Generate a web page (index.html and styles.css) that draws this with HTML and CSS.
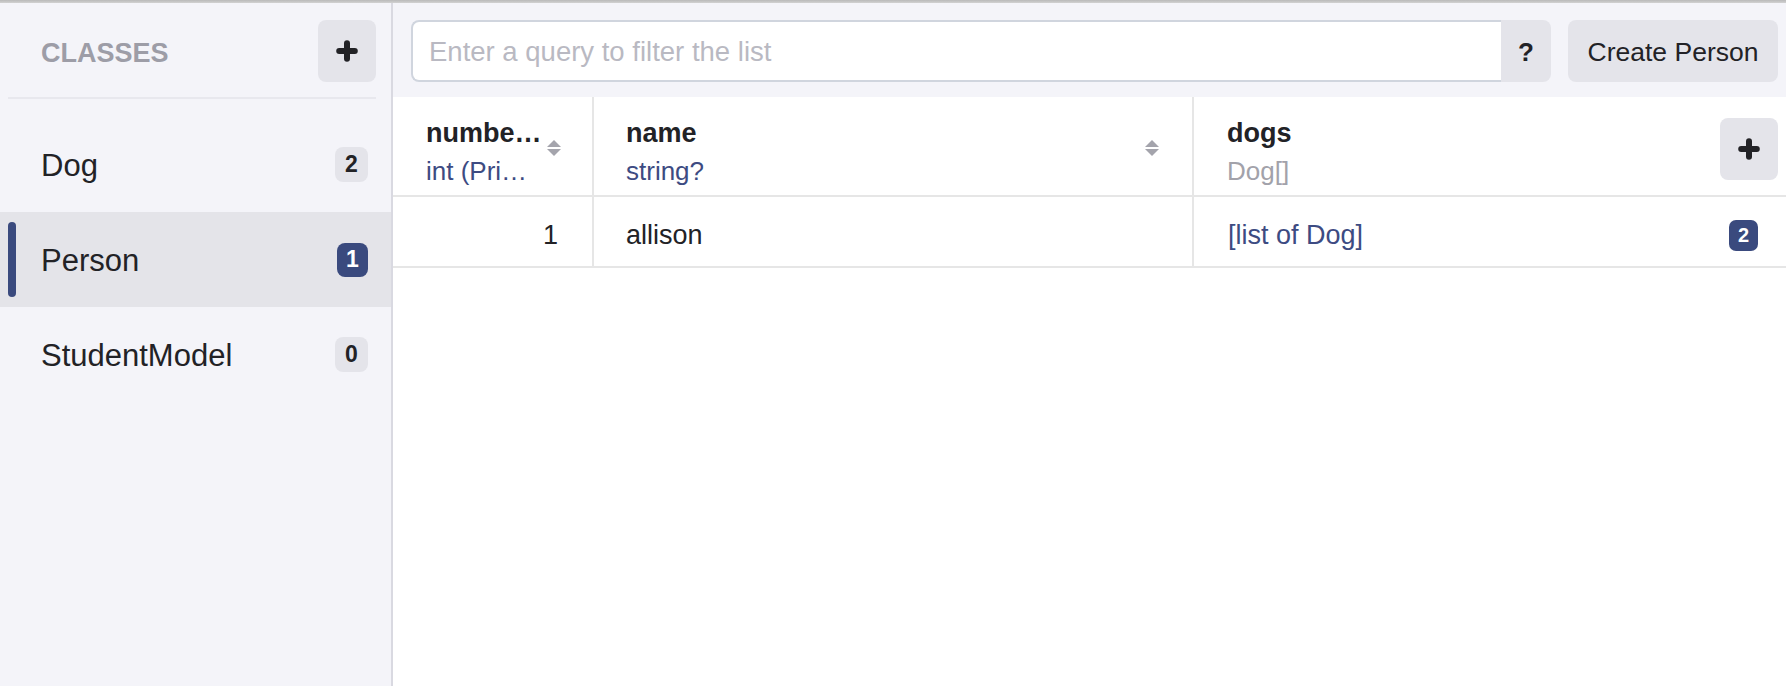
FILE: index.html
```html
<!DOCTYPE html>
<html lang="en">
<head>
<meta charset="utf-8">
<title>Realm Browser</title>
<link rel="stylesheet" href="styles.css">
</head>
<body>
<div class="titlebar"></div>
<div class="app">
  <aside class="sidebar">
    <div class="side-header">
      <span class="side-title">CLASSES</span>
      <button class="icon-btn" aria-label="Add class">
        <svg class="plus" viewBox="0 0 22 22" width="22" height="22"><path d="M11 3.2V18.8M3.2 11H18.8" stroke="#222226" stroke-width="6" stroke-linecap="round" fill="none"/></svg>
      </button>
    </div>
    <ul class="class-list">
      <li class="class-item"><span class="indicator"></span><span class="class-name">Dog</span><span class="badge">2</span></li>
      <li class="class-item selected"><span class="indicator"></span><span class="class-name">Person</span><span class="badge">1</span></li>
      <li class="class-item"><span class="indicator"></span><span class="class-name">StudentModel</span><span class="badge">0</span></li>
    </ul>
  </aside>
  <main class="content">
    <div class="toolbar">
      <div class="query-group">
        <input class="query-input" type="text" placeholder="Enter a query to filter the list">
        <button class="help-btn">?</button>
      </div>
      <button class="create-btn">Create Person</button>
    </div>
    <div class="table">
      <div class="hcell hcell-num">
        <div class="hlabels">
          <div class="hname">numbe…</div>
          <div class="htype">int (Pri…</div>
        </div>
        <svg class="sort" viewBox="0 0 14 16" width="14" height="16"><polygon points="7,0 14,7 0,7" fill="#a4a4ac"/><polygon points="0,9 14,9 7,16" fill="#a4a4ac"/></svg>
      </div>
      <div class="hcell hcell-name">
        <div class="hlabels">
          <div class="hname">name</div>
          <div class="htype">string?</div>
        </div>
        <svg class="sort" viewBox="0 0 14 16" width="14" height="16"><polygon points="7,0 14,7 0,7" fill="#a4a4ac"/><polygon points="0,9 14,9 7,16" fill="#a4a4ac"/></svg>
      </div>
      <div class="hcell hcell-dogs">
        <div class="hlabels">
          <div class="hname">dogs</div>
          <div class="htype htype-muted">Dog[]</div>
        </div>
        <button class="icon-btn icon-btn-col" aria-label="Add property">
          <svg class="plus" viewBox="0 0 22 22" width="22" height="22"><path d="M11 3.2V18.8M3.2 11H18.8" stroke="#222226" stroke-width="6" stroke-linecap="round" fill="none"/></svg>
        </button>
      </div>
      <div class="cell cell-num">1</div>
      <div class="cell cell-name">allison</div>
      <div class="cell cell-dogs"><span class="list-link">[list of Dog]</span><span class="count-badge">2</span></div>
    </div>
  </main>
</div>
</body>
</html>
```
FILE: styles.css
```css
* {
  box-sizing: border-box;
}

html, body {
  margin: 0;
  padding: 0;
  width: 1786px;
  height: 686px;
  overflow: hidden;
  background: #ffffff;
  font-family: "Liberation Sans", Arial, sans-serif;
  color: #222226;
}

.titlebar {
  height: 3px;
  background: linear-gradient(#b9b9b9, #d2d2d2);
}

.app {
  display: flex;
  height: 683px;
}

/* Sidebar */
.sidebar {
  width: 393px;
  flex: none;
  background: #f4f4f9;
  border-right: 2px solid #d9d9e1;
}

.side-header {
  display: flex;
  justify-content: space-between;
  align-items: flex-start;
  height: 96px;
  margin: 0 15px 0 8px;
  padding: 17px 0 0 33px;
  border-bottom: 2px solid #e8e8ee;
}

.side-title {
  font-size: 27px;
  font-weight: bold;
  line-height: 62px;
  padding-top: 2px;
  color: #9d9da7;
}

.icon-btn {
  display: flex;
  align-items: center;
  justify-content: center;
  width: 58px;
  height: 62px;
  padding: 0;
  border: none;
  border-radius: 8px;
  background: #e4e4ea;
}

.plus {
  display: block;
}

.class-list {
  list-style: none;
  margin: 0;
  padding: 18px 0 0;
}

.class-item {
  display: flex;
  align-items: center;
  height: 95px;
  padding: 0 23px 0 8px;
}

.class-item.selected {
  background: #e4e4e9;
}

.indicator {
  width: 8px;
  height: 75px;
  border-radius: 4px;
  margin-right: 25px;
}

.selected .indicator {
  background: #3a4a7e;
}

.class-name {
  flex: 1;
  font-size: 31px;
  padding-top: 3px;
  color: #222226;
}

.badge {
  display: flex;
  align-items: center;
  justify-content: center;
  min-width: 33px;
  height: 35px;
  padding: 0 8px;
  border-radius: 8px;
  background: #e4e4ea;
  color: #222226;
  font-size: 23px;
  font-weight: bold;
}

.selected .badge {
  min-width: 31px;
  height: 34px;
  background: #3a4a7e;
  color: #ffffff;
}

/* Main */
.content {
  flex: 1;
  min-width: 0;
  display: flex;
  flex-direction: column;
  background: #ffffff;
}

.toolbar {
  display: flex;
  align-items: flex-start;
  gap: 17px;
  height: 94px;
  padding: 17px 8px 0 18px;
  background: #f4f4f9;
}

.query-group {
  flex: 1;
  display: flex;
  height: 62px;
}

.query-input {
  flex: 1;
  min-width: 0;
  height: 62px;
  padding: 2px 16px 0;
  border: 2px solid #d0d5de;
  border-right: none;
  border-radius: 8px 0 0 8px;
  background: #ffffff;
  font-family: "Liberation Sans", Arial, sans-serif;
  font-size: 27.5px;
  color: #222226;
  outline: none;
}

.query-input::placeholder {
  color: #b9b9c2;
}

.help-btn {
  width: 50px;
  height: 62px;
  padding: 2px 0 0;
  border: none;
  border-radius: 0 8px 8px 0;
  background: #e4e4ea;
  font-family: "Liberation Sans", Arial, sans-serif;
  font-size: 26px;
  font-weight: bold;
  color: #222226;
}

.create-btn {
  width: 210px;
  height: 62px;
  padding: 2px 0 0;
  border: none;
  border-radius: 8px;
  background: #e4e4ea;
  font-family: "Liberation Sans", Arial, sans-serif;
  font-size: 26.5px;
  color: #222226;
}

/* Table */
.table {
  display: grid;
  grid-template-columns: 201px 600px 1fr;
}

.hcell {
  display: flex;
  align-items: flex-start;
  height: 100px;
  padding-top: 17px;
  border-bottom: 2px solid #e6e6e6;
  border-right: 2px solid #e6e6e6;
}

.hcell-num {
  padding-left: 33px;
  padding-right: 31px;
}

.hcell-name {
  padding-left: 32px;
  padding-right: 33px;
}

.hcell-dogs {
  padding-left: 33px;
  padding-right: 8px;
  border-right: none;
}

.hlabels {
  flex: 1;
  min-width: 0;
}

.hname {
  font-size: 27px;
  font-weight: bold;
  line-height: 38px;
  color: #222226;
  white-space: nowrap;
  overflow: hidden;
}

.htype {
  font-size: 26px;
  line-height: 38px;
  color: #3d4b82;
  white-space: nowrap;
  overflow: hidden;
}

.htype-muted {
  color: #a2a2aa;
}

.sort {
  flex: none;
  display: block;
  margin-top: 26px;
  margin-left: 6px;
}

.icon-btn-col {
  flex: none;
  margin-top: 4px;
}

.cell {
  display: flex;
  align-items: center;
  height: 71px;
  padding-top: 7px;
  font-size: 27px;
  color: #222226;
  border-bottom: 2px solid #e6e6e6;
  border-right: 2px solid #e6e6e6;
}

.cell-num {
  justify-content: flex-end;
  padding-right: 34px;
}

.cell-name {
  padding-left: 32px;
}

.cell-dogs {
  justify-content: space-between;
  padding-left: 34px;
  padding-right: 28px;
  border-right: none;
}

.list-link {
  color: #3d4b82;
}

.count-badge {
  display: flex;
  align-items: center;
  justify-content: center;
  min-width: 29px;
  height: 31px;
  padding: 0 6px;
  border-radius: 7px;
  background: #3a4a7e;
  color: #ffffff;
  font-size: 20px;
  font-weight: bold;
}
```
